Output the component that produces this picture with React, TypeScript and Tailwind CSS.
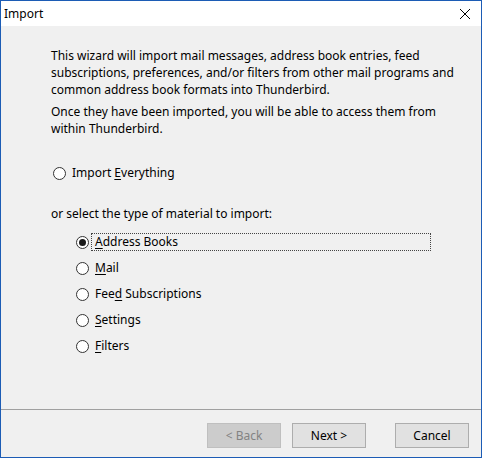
import React from "react";

function Radio({ checked }: { checked?: boolean }) {
  return (
    <span className="ml-[2px] flex h-[13px] w-[13px] shrink-0 items-center justify-center rounded-full border border-[#333333] bg-white">
      {checked ? <span className="h-[7px] w-[7px] rounded-full bg-[#1a1a1a]" /> : null}
    </span>
  );
}

function Option({
  before,
  key1,
  after,
  checked,
  focused,
}: {
  before?: string;
  key1: string;
  after: string;
  checked?: boolean;
  focused?: boolean;
}) {
  return (
    <div className="flex h-[18px] items-center">
      <Radio checked={checked} />
      <span
        className={
          focused
            ? "ml-[2px] block h-[18px] w-[340px] whitespace-pre border border-dotted border-[#444444] px-[3px] leading-[16px]"
            : "ml-[2px] block h-[18px] whitespace-pre border border-transparent px-[3px] leading-[16px]"
        }
      >
        {before}
        <span className="underline underline-offset-2">{key1}</span>
        {after}
      </span>
    </div>
  );
}

export default function App() {
  return (
    <div className="flex h-[458px] w-[482px] flex-col border border-[#1c5cb5] bg-[#f0f0f0] font-['Noto_Sans',sans-serif] text-[12px] leading-[17px] text-black">
      <div className="flex h-[25px] shrink-0 items-center justify-between bg-white pl-[3px] pr-[9px]">
        <span>Import</span>
        <svg width="12" height="12" viewBox="0 0 12 12" className="mr-[1px]">
          <path d="M1 1 L11 11 M11 1 L1 11" stroke="#000" strokeWidth="1" fill="none" />
        </svg>
      </div>
      <div className="flex flex-1 flex-col pl-[50px] pt-[21px]">
        <p>
          This wizard will import mail messages, address book entries, feed
          <br />
          subscriptions, preferences, and/or filters from other mail programs and
          <br />
          common address book formats into Thunderbird.
        </p>
        <p className="mt-[5px]">
          Once they have been imported, you will be able to access them from
          <br />
          within Thunderbird.
        </p>
        <div className="mt-[27px]">
          <Option before="Import " key1="E" after="verything" />
        </div>
        <p className="mt-[23px]">or select the type of material to import:</p>
        <div className="ml-[23px] mt-[11px] flex flex-col gap-[8px]">
          <Option key1="A" after="ddress Books" checked focused />
          <Option key1="M" after="ail" />
          <Option before="Fee" key1="d" after=" Subscriptions" />
          <Option key1="S" after="ettings" />
          <Option key1="F" after="ilters" />
        </div>
      </div>
      <div className="h-px shrink-0 bg-[#a0a0a0]" />
      <div className="flex h-[47px] shrink-0 items-start justify-end pr-[12px] pt-[13px]">
        <div className="flex h-[25px] w-[74px] items-center justify-center border border-[#bfbfbf] bg-[#cccccc] text-[#838383]">
          &lt; Back
        </div>
        <div className="ml-[11px] flex h-[25px] w-[74px] items-center justify-center border border-[#adadad] bg-[#e1e1e1]">
          Next &gt;
        </div>
        <div className="ml-[29px] flex h-[25px] w-[74px] items-center justify-center border border-[#adadad] bg-[#e1e1e1]">
          Cancel
        </div>
      </div>
    </div>
  );
}
